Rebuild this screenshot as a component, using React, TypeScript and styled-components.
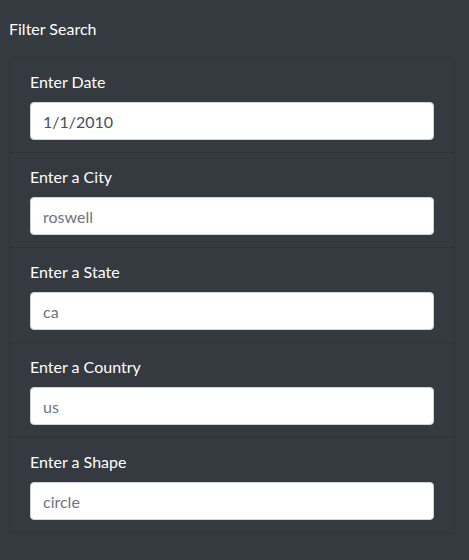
import React from "react";
import styled, { createGlobalStyle } from "styled-components";

const Global = createGlobalStyle`
  html, body { margin: 0; padding: 0; background: #343a40; }
  body { font-family: "Segoe UI", Lato, "Noto Sans", sans-serif; }
  * { box-sizing: border-box; }
`;

const Page = styled.div`
  background: #343a40;
  min-height: 560px;
  padding: 17px 15px 28px 9px;
`;

const Title = styled.div`
  color: #fff;
  font-size: 16px;
  line-height: 24px;
  margin-bottom: 16px;
`;

const List = styled.ul`
  list-style: none;
  margin: 0;
  padding: 0;
  display: flex;
  flex-direction: column;
  border: 1px solid rgba(0, 0, 0, 0.125);
  border-radius: 4px;
  width: 446px;
`;

const Item = styled.li`
  padding: 12px 20px;
  background: #343a40;
  border-top: 1px solid rgba(0, 0, 0, 0.125);
  &:first-child { border-top: none; }
`;

const Label = styled.label`
  display: block;
  color: #fff;
  font-size: 16px;
  line-height: 24px;
  margin-bottom: 8px;
`;

const Input = styled.input`
  display: block;
  width: 100%;
  height: 38px;
  padding: 6px 12px;
  font-family: inherit;
  font-size: 16px;
  line-height: 24px;
  color: #495057;
  background: #fff;
  border: 1px solid #ced4da;
  border-radius: 4px;
  outline: none;
  &::placeholder { color: #6c757d; opacity: 1; }
`;

const fields = [
  { label: "Enter Date", value: "1/1/2010", placeholder: "" },
  { label: "Enter a City", value: "", placeholder: "roswell" },
  { label: "Enter a State", value: "", placeholder: "ca" },
  { label: "Enter a Country", value: "", placeholder: "us" },
  { label: "Enter a Shape", value: "", placeholder: "circle" },
];

export default function App() {
  return (
    <Page>
      <Global />
      <Title>Filter Search</Title>
      <List>
        {fields.map((f) => (
          <Item key={f.label}>
            <Label>{f.label}</Label>
            <Input defaultValue={f.value} placeholder={f.placeholder} />
          </Item>
        ))}
      </List>
    </Page>
  );
}
